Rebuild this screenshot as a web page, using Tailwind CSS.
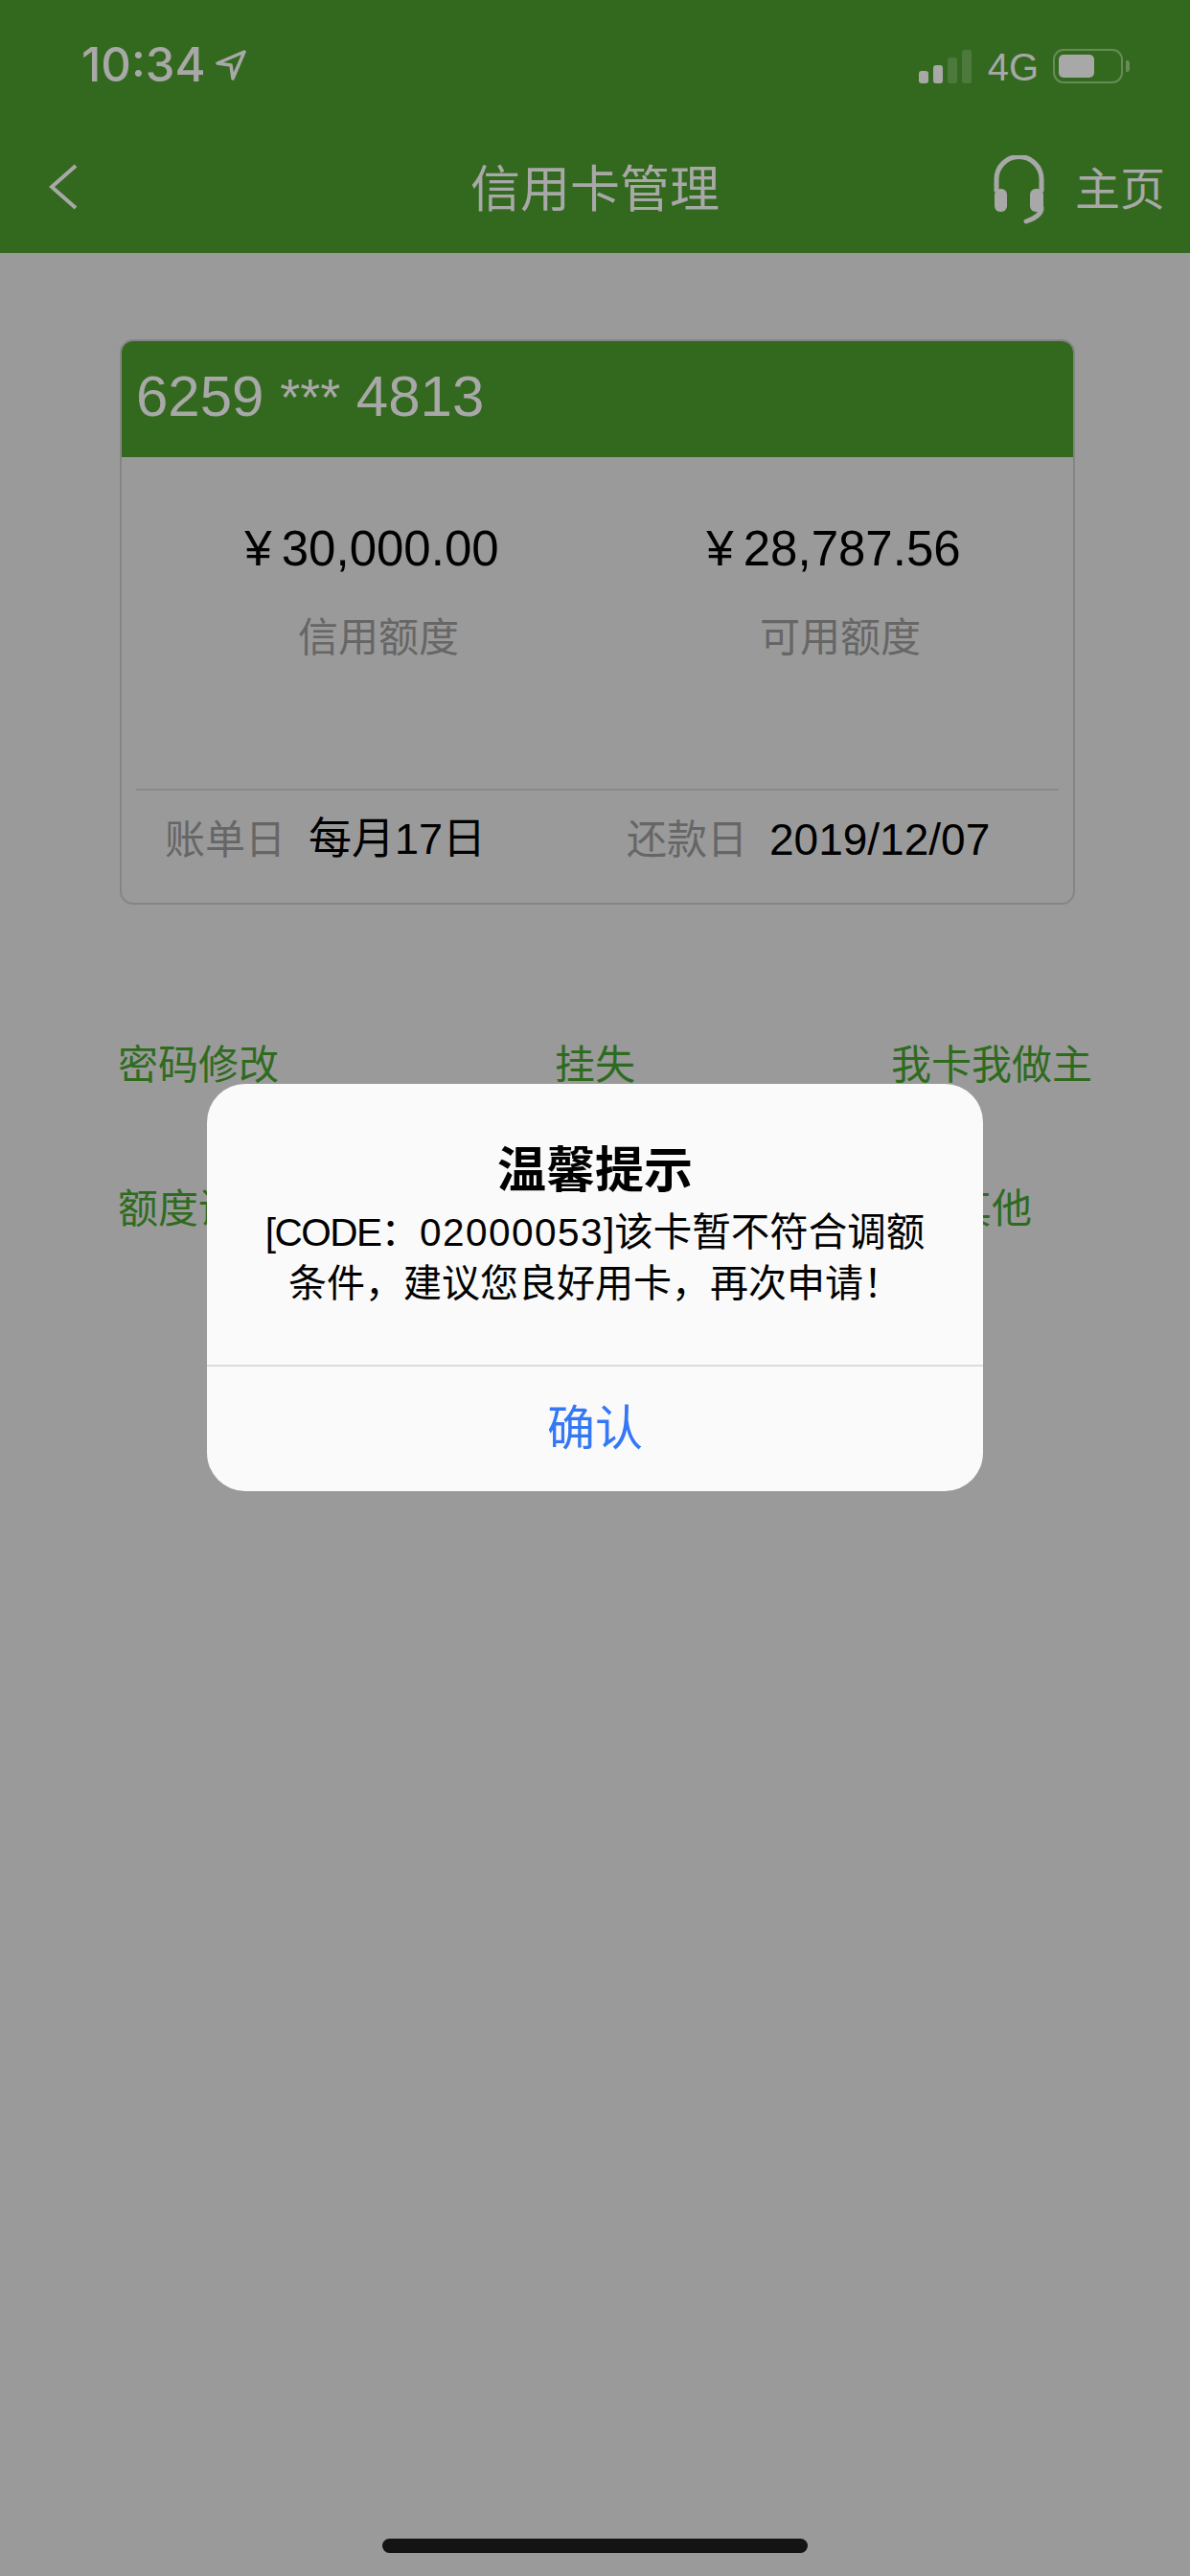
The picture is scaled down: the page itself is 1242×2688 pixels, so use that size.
<!DOCTYPE html>
<html lang="zh-CN">
<head>
    <meta charset="UTF-8">
    <meta name="viewport" content="width=device-width, initial-scale=1.0">
    <title>信用卡管理</title>
    <script src="https://cdn.jsdelivr.net/npm/@tailwindcss/browser@4"></script>
</head>
<body class="bg-[#9a9a9a]">
    <div class="relative w-[1242px] h-[2688px] overflow-hidden font-['Liberation_Sans','Noto_Sans_CJK_SC',sans-serif]">

        <!-- status bar + nav -->
        <header class="h-[264px] bg-[#33691e] text-[#a8a8a8] flex flex-col">
            <div class="h-[88px] pt-[46px] pl-[85px] pr-[63px] flex items-start justify-between">
                <div class="flex items-center gap-[10px] h-[44px]">
                    <span class="font-['Inter',sans-serif] font-medium text-[49px] leading-[44px]">10:34</span>
                    <svg class="w-[32px] h-[32px]" viewBox="0 0 32 32" fill="none" stroke="#a8a8a8" stroke-width="3.5" stroke-linejoin="round">
                        <path d="M30 2 L2 14 L16 16 L18 30 Z"></path>
                    </svg>
                </div>
                <div class="flex items-end h-[44px] gap-[17px]">
                    <div class="flex items-end gap-[5px] h-[36px] mb-[3px]">
                        <div class="w-[10px] h-[13px] rounded-[3px] bg-[#a8a8a8]"></div>
                        <div class="w-[10px] h-[19px] rounded-[3px] bg-[#a8a8a8]"></div>
                        <div class="w-[10px] h-[27px] rounded-[3px] bg-[#4d7a3c]"></div>
                        <div class="w-[10px] h-[35px] rounded-[3px] bg-[#4d7a3c]"></div>
                    </div>
                    <span class="text-[40px] leading-[36px] mb-[2px]">4G</span>
                    <div class="flex items-center gap-[3px] ml-[-2px] mb-[3px]">
                        <div class="w-[73px] h-[36px] p-[4px] rounded-[11px] border-[2px] border-[#668c57]">
                            <div class="w-[37px] h-full rounded-[5px] bg-[#a8a8a8]"></div>
                        </div>
                        <div class="w-[4px] h-[12px] rounded-r-[3px] bg-[#668c57]"></div>
                    </div>
                </div>
            </div>
            <div class="relative h-[176px] pt-[44px] flex items-center justify-between pl-[51px] pr-[26px]">
                <svg class="w-[30px] h-[48px] mb-[7px]" viewBox="0 0 30 48" fill="none" stroke="#a8a8a8" stroke-width="4">
                    <path d="M28 2 L3 24 L28 46"></path>
                </svg>
                <h1 class="absolute inset-x-0 text-center text-[52px] leading-[60px]">信用卡管理</h1>
                <div class="flex items-center gap-[31px]">
                    <svg class="w-[54px] h-[72px]" viewBox="0 0 54 72" fill="none">
                        <path d="M3 38 V25 A23.5 23.5 0 0 1 50 25 V38" stroke="#a8a8a8" stroke-width="5"></path>
                        <rect x="1" y="35" width="13" height="24" rx="6" fill="#a8a8a8"></rect>
                        <rect x="38" y="35" width="14" height="24" rx="6" fill="#a8a8a8"></rect>
                        <path d="M50 55 C50 62 43 66 34 69" stroke="#a8a8a8" stroke-width="5" stroke-linecap="round"></path>
                    </svg>
                    <span class="text-[47px] leading-[60px]">主页</span>
                </div>
            </div>
        </header>

        <!-- card -->
        <section class="ml-[125px] mt-[90px] w-[997px] h-[590px] border-2 border-[#858585] rounded-[14px] overflow-hidden">
            <div class="h-[121px] bg-[#33691e] pl-[15px] pb-[6px] flex items-center text-[#a8a8a8] text-[60px] leading-[70px]">6259&nbsp;<span class="text-[54px]">***</span>&nbsp;4813</div>
            <div class="pl-[27px] grid grid-cols-[482px_482px] mt-[66px] text-center">
                <div class="pr-[14px] text-[51px] leading-[60px] text-black">¥<span class="ml-[10px]">30,000.00</span></div>
                <div class="pr-[14px] text-[51px] leading-[60px] text-black">¥<span class="ml-[10px]">28,787.56</span></div>
                <div class="mt-[33px] text-[42px] leading-[60px] text-[#666666]">信用额度</div>
                <div class="mt-[33px] text-[42px] leading-[60px] text-[#666666]">可用额度</div>
            </div>
            <div class="mx-[15px] mt-[127px] h-[2px] bg-[#8a8a8a]"></div>
            <div class="mt-[21px] flex items-center h-[60px] pl-[45px]">
                <span class="w-[150px] text-[42px] text-[#666666]">账单日</span>
                <span class="w-[332px] text-[45px] text-black">每月17日</span>
                <span class="w-[149px] text-[42px] text-[#666666]">还款日</span>
                <span class="text-[46px] text-black">2019/12/07</span>
            </div>
        </section>

        <!-- links -->
        <nav class="mt-[138px] grid grid-cols-3 gap-y-[90px] text-center text-[42px] leading-[60px] text-[#2f6b1e]">
            <a>密码修改</a>
            <a>挂失</a>
            <a>我卡我做主</a>
            <a>额度调整</a>
            <a></a>
            <a>其他</a>
        </nav>

        <!-- alert -->
        <div class="absolute inset-0 pt-[1131px]">
            <div class="mx-auto w-[810px] h-[425px] rounded-[40px] bg-[#fafafa] flex flex-col text-center">
                <div class="h-[293px] pt-[61px]">
                    <h2 class="text-[51px] leading-[60px] font-bold text-black">温馨提示</h2>
                    <p class="mt-[8px] text-[40.5px] leading-[53px] text-black whitespace-nowrap"><span class="tracking-[-1.5px]">[CODE</span>&#xFF1A;<span class="tracking-[1.5px]">02000053</span>]该卡暂不符合调额<br><span class="text-[40px]">条件&#xFF0C;建议您良好用卡&#xFF0C;再次申请&#xFF01;</span></p>
                </div>
                <button class="flex-1 border-t-2 border-[#dcdcdc] text-[50px] text-[#3478f6]">确认</button>
            </div>
        </div>

        <div class="absolute left-[399px] top-[2649px] w-[444px] h-[15px] rounded-full bg-[#141414]"></div>
    </div>
</body>
</html>
